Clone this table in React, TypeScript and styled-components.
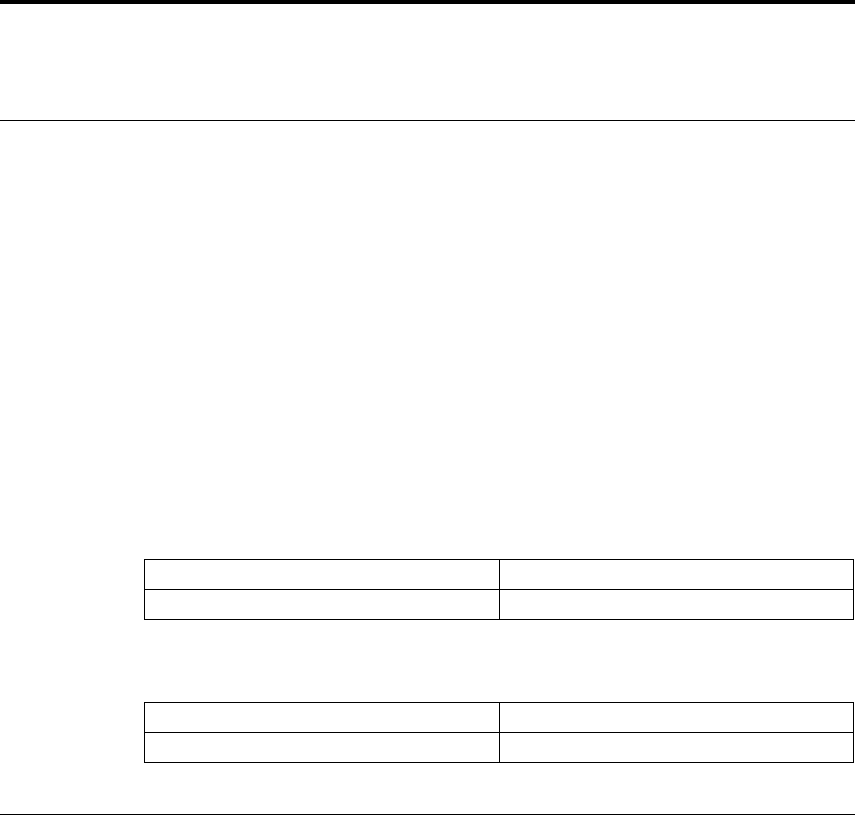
import styled, { createGlobalStyle } from 'styled-components';

const GlobalStyle = createGlobalStyle`
  html, body {
    margin: 0;
    padding: 0;
    background: #ffffff;
    font-family: "Liberation Sans", Arial, sans-serif;
    color: #000000;
  }
`;

const Page = styled.div`
  display: flex;
  flex-direction: column;
  min-height: 815px;
`;

const Header = styled.header`
  height: 116px;
  border-top: 4px solid #000;
  border-bottom: 1px solid #000;
`;

const Main = styled.main`
  display: flex;
  flex-direction: column;
  gap: 82px;
  padding: 438px 1px 0 144px;
`;

const Table = styled.table`
  width: 710px;
  border-collapse: collapse;
  table-layout: fixed;
`;

const Cell = styled.td`
  height: 29px;
  padding: 0;
  border: 1px solid #000;
`;

const Footer = styled.footer`
  margin-top: auto;
  border-top: 1px solid #000;
  height: 0;
`;

const rows = [0, 1];

function DataTable() {
  return (
    <Table>
      <tbody>
        {rows.map((r) => (
          <tr key={r}>
            <Cell />
            <Cell />
          </tr>
        ))}
      </tbody>
    </Table>
  );
}

export default function App() {
  return (
    <>
      <GlobalStyle />
      <Page>
        <Header />
        <Main>
          <DataTable />
          <DataTable />
        </Main>
        <Footer />
      </Page>
    </>
  );
}
